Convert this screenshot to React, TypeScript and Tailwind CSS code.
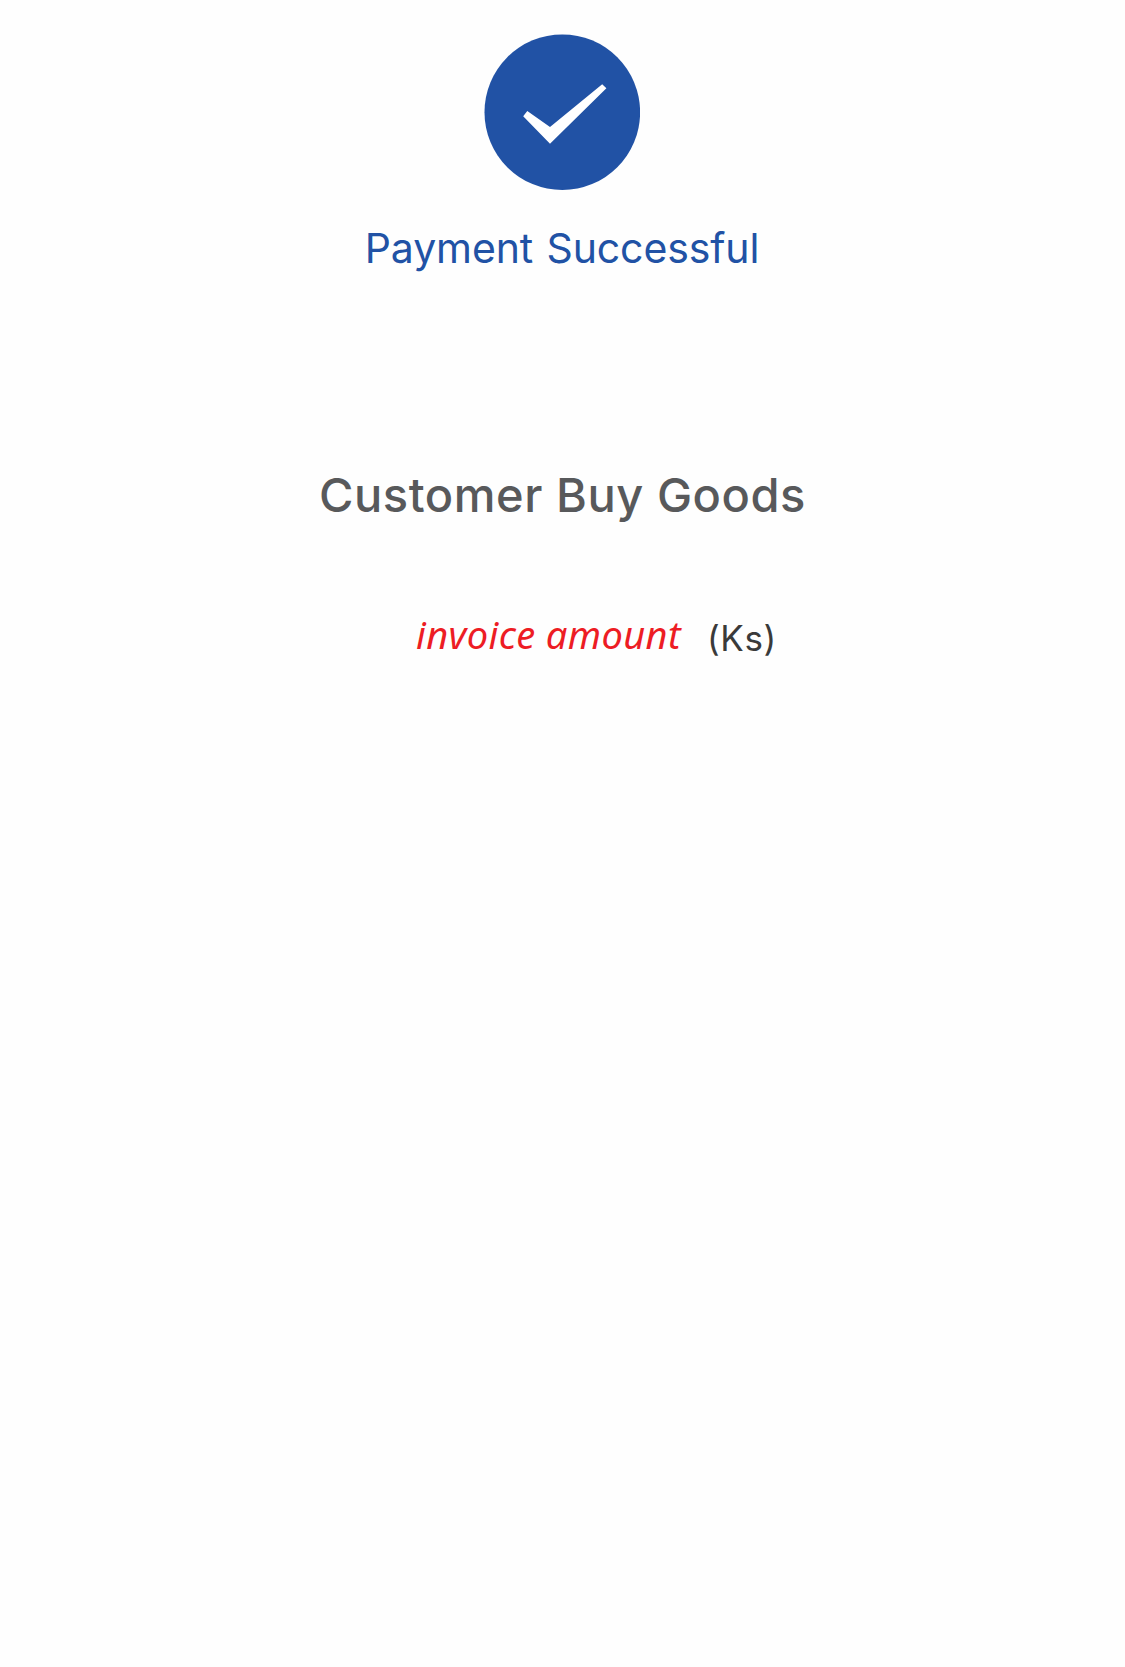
function SuccessBadge() {
  return (
    <svg className="mr-px block h-[156px] w-[156px]" viewBox="0 0 156 156" role="img" aria-label="Success">
      <circle cx="78.3" cy="78.2" r="77.8" fill="#2152a5" />
      <path
        d="M43.3 77 L39.2 82.3 L66 109.8 L122.4 54.2 L118.2 50.2 L66 93 Z"
        fill="#fff"
      />
    </svg>
  );
}

export default function App() {
  return (
    <main className="flex min-h-[1667px] w-full flex-col items-center bg-[#fefefe] pt-[34px] font-['Inter',sans-serif]">
      <SuccessBadge />
      <p className="mt-7 mr-px whitespace-nowrap text-[41px] leading-[60px] font-normal tracking-[-0.12px] [word-spacing:2px] text-[#2152a5]">
        Payment Successful
      </p>
      <h1 className="mt-[187px] whitespace-nowrap text-[47px] leading-[60px] font-medium tracking-[0.55px] text-[#58595b]">
        Customer Buy Goods
      </h1>
      <div className="mt-[84px] flex w-full items-start whitespace-nowrap pl-[416px] leading-[50px]">
        <span className="w-[291px] font-['Noto_Sans',sans-serif] text-[38px] tracking-[0.38px] text-[#ed1c24] italic">
          invoice amount
        </span>
        <span className="mt-1 text-[35px] font-normal tracking-[0.6px] text-[#3a3a3a]">(Ks)</span>
      </div>
    </main>
  );
}
